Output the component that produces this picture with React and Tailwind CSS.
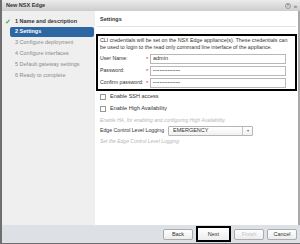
import React from "react";

const F = { fontFamily: '"Liberation Sans", Arial, sans-serif' };

function Btn({ children, disabled }) {
  return (
    <div
      className={`w-[30px] h-[11px] flex items-center justify-center rounded-[2px] border border-[#a9abaf] bg-gradient-to-b from-[#ffffff] to-[#ececec] text-[5.5px] ${disabled ? "text-[#c4c4c4]" : "text-[#333]"}`}
    >
      {children}
    </div>
  );
}

function Row({ label, value, pwd }) {
  return (
    <div className="flex items-center h-[10px]">
      <div className="w-[46px] text-[5.2px] text-[#333] leading-none whitespace-nowrap">{label}</div>
      <div className="w-[4px] text-[6px] text-[#d33] leading-none">*</div>
      <div className="flex-1 h-[10px] border border-[#b8b8b8] bg-white flex items-center px-[2px] text-[5.5px] text-[#333] leading-none">
        {pwd ? <span className="text-[4px] tracking-[0.2px] text-[#555]">•••••••••••••••••</span> : value}
      </div>
    </div>
  );
}

export default function App() {
  const steps = [
    "3 Configure deployment",
    "4 Configure interfaces",
    "5 Default gateway settings",
    "6 Ready to complete",
  ];
  return (
    <div style={F} className="w-[300px] h-[244px] flex flex-col bg-[#dde0e5] border-l-[2px] border-b-[1px] border-[#6f6f6f] overflow-hidden">
      {/* title bar */}
      <div className="h-[11px] flex items-center justify-between bg-gradient-to-b from-[#ececec] to-[#cdcdcd] pl-[4px] pr-[3px]">
        <span className="text-[5.5px] font-bold text-[#333] leading-none">New NSX Edge</span>
        <div className="flex items-center gap-[3px]">
          <div className="w-[6px] h-[6px] rounded-full border border-[#999] flex items-center justify-center text-[4px] text-[#777] leading-none font-bold">?</div>
          <span className="text-[6px] text-[#777] leading-none font-bold">»</span>
        </div>
      </div>
      {/* main */}
      <div className="flex flex-1 min-h-0">
        {/* sidebar */}
        <div className="w-[93px] bg-[#efefef] pt-[5px] flex flex-col">
          <div className="h-[11px] flex items-center pl-[3px] text-[5.5px] text-[#333] font-semibold leading-none">
            <span className="w-[10px] text-[#4aa93a] text-[7px] font-bold">✓</span>
            <span>1 Name and description</span>
          </div>
          <div className="h-[10px] ml-[8px] mr-[1px] rounded-[2px] bg-[#2c67a3] flex items-center pl-[5px] text-[5.5px] text-white font-bold leading-none">
            2 Settings
          </div>
          {steps.map((s) => (
            <div key={s} className="h-[11px] flex items-center pl-[13px] text-[5.5px] text-[#8a8a8a] leading-none">
              {s}
            </div>
          ))}
        </div>
        {/* content */}
        <div className="flex-1 bg-white border-r-[2px] border-[#a9a9a9] flex flex-col">
          <div className="h-[14px] mx-[2px] mt-[2px] border-b border-[#e3e3e3] flex items-center pl-[3px] text-[5.5px] font-bold text-[#333] leading-none">
            Settings
          </div>
          <div className="mt-[7px] ml-[1px] mr-[1px] border-[2px] border-black px-[2px] pt-[1px] pb-[1px]">
            <div className="text-[5.3px] leading-[7px] text-[#333]">
              CLI credentials will be set on the NSX Edge appliance(s). These credentials can be used to login to the read only command line interface of the appliance.
            </div>
            <div className="mt-[3px] pr-[7px] flex flex-col gap-[2px]">
              <Row label="User Name:" value="admin" />
              <Row label="Password:" pwd />
              <Row label="Confirm password:" pwd />
            </div>
          </div>
          <div className="pl-[5px] flex flex-col">
            <div className="h-[12px] flex items-center gap-[4px]">
              <div className="w-[6px] h-[6px] border border-[#999] bg-white" />
              <span className="text-[5.5px] text-[#333] leading-none">Enable SSH access</span>
            </div>
            <div className="h-[12px] flex items-center gap-[4px]">
              <div className="w-[6px] h-[6px] border border-[#999] bg-white" />
              <span className="text-[5.5px] text-[#333] leading-none">Enable High Availability</span>
            </div>
            <div className="h-[10px] flex items-center text-[5px] italic text-[#b5b5b5] leading-none">
              Enable HA, for enabling and configuring High Availability.
            </div>
            <div className="h-[11px] flex items-center gap-[4px]">
              <span className="text-[5.2px] text-[#333] leading-none">Edge Control Level Logging</span>
              <div className="w-[85px] h-[10px] border border-[#b5b5b5] rounded-[1px] bg-gradient-to-b from-white to-[#f1f1f1] flex items-center">
                <span className="flex-1 pl-[4px] text-[5.5px] text-[#333] leading-none">EMERGENCY</span>
                <div className="w-[10px] h-full border-l border-[#c5c5c5] flex items-center justify-center text-[4px] text-[#666]">▾</div>
              </div>
            </div>
            <div className="h-[11px] flex items-center text-[5px] italic text-[#b5b5b5] leading-none">
              Set the Edge Control Level Logging
            </div>
          </div>
        </div>
      </div>
      {/* footer */}
      <div className="h-[18px] flex items-center justify-end gap-[3px] pr-[3px]">
        <Btn>Back</Btn>
        <div className="border-[2px] border-black">
          <div className="w-[31px] h-[12px] flex items-center justify-center bg-gradient-to-b from-white to-[#ececec] text-[5.5px] text-[#333]">Next</div>
        </div>
        <Btn disabled>Finish</Btn>
        <Btn>Cancel</Btn>
      </div>
    </div>
  );
}
